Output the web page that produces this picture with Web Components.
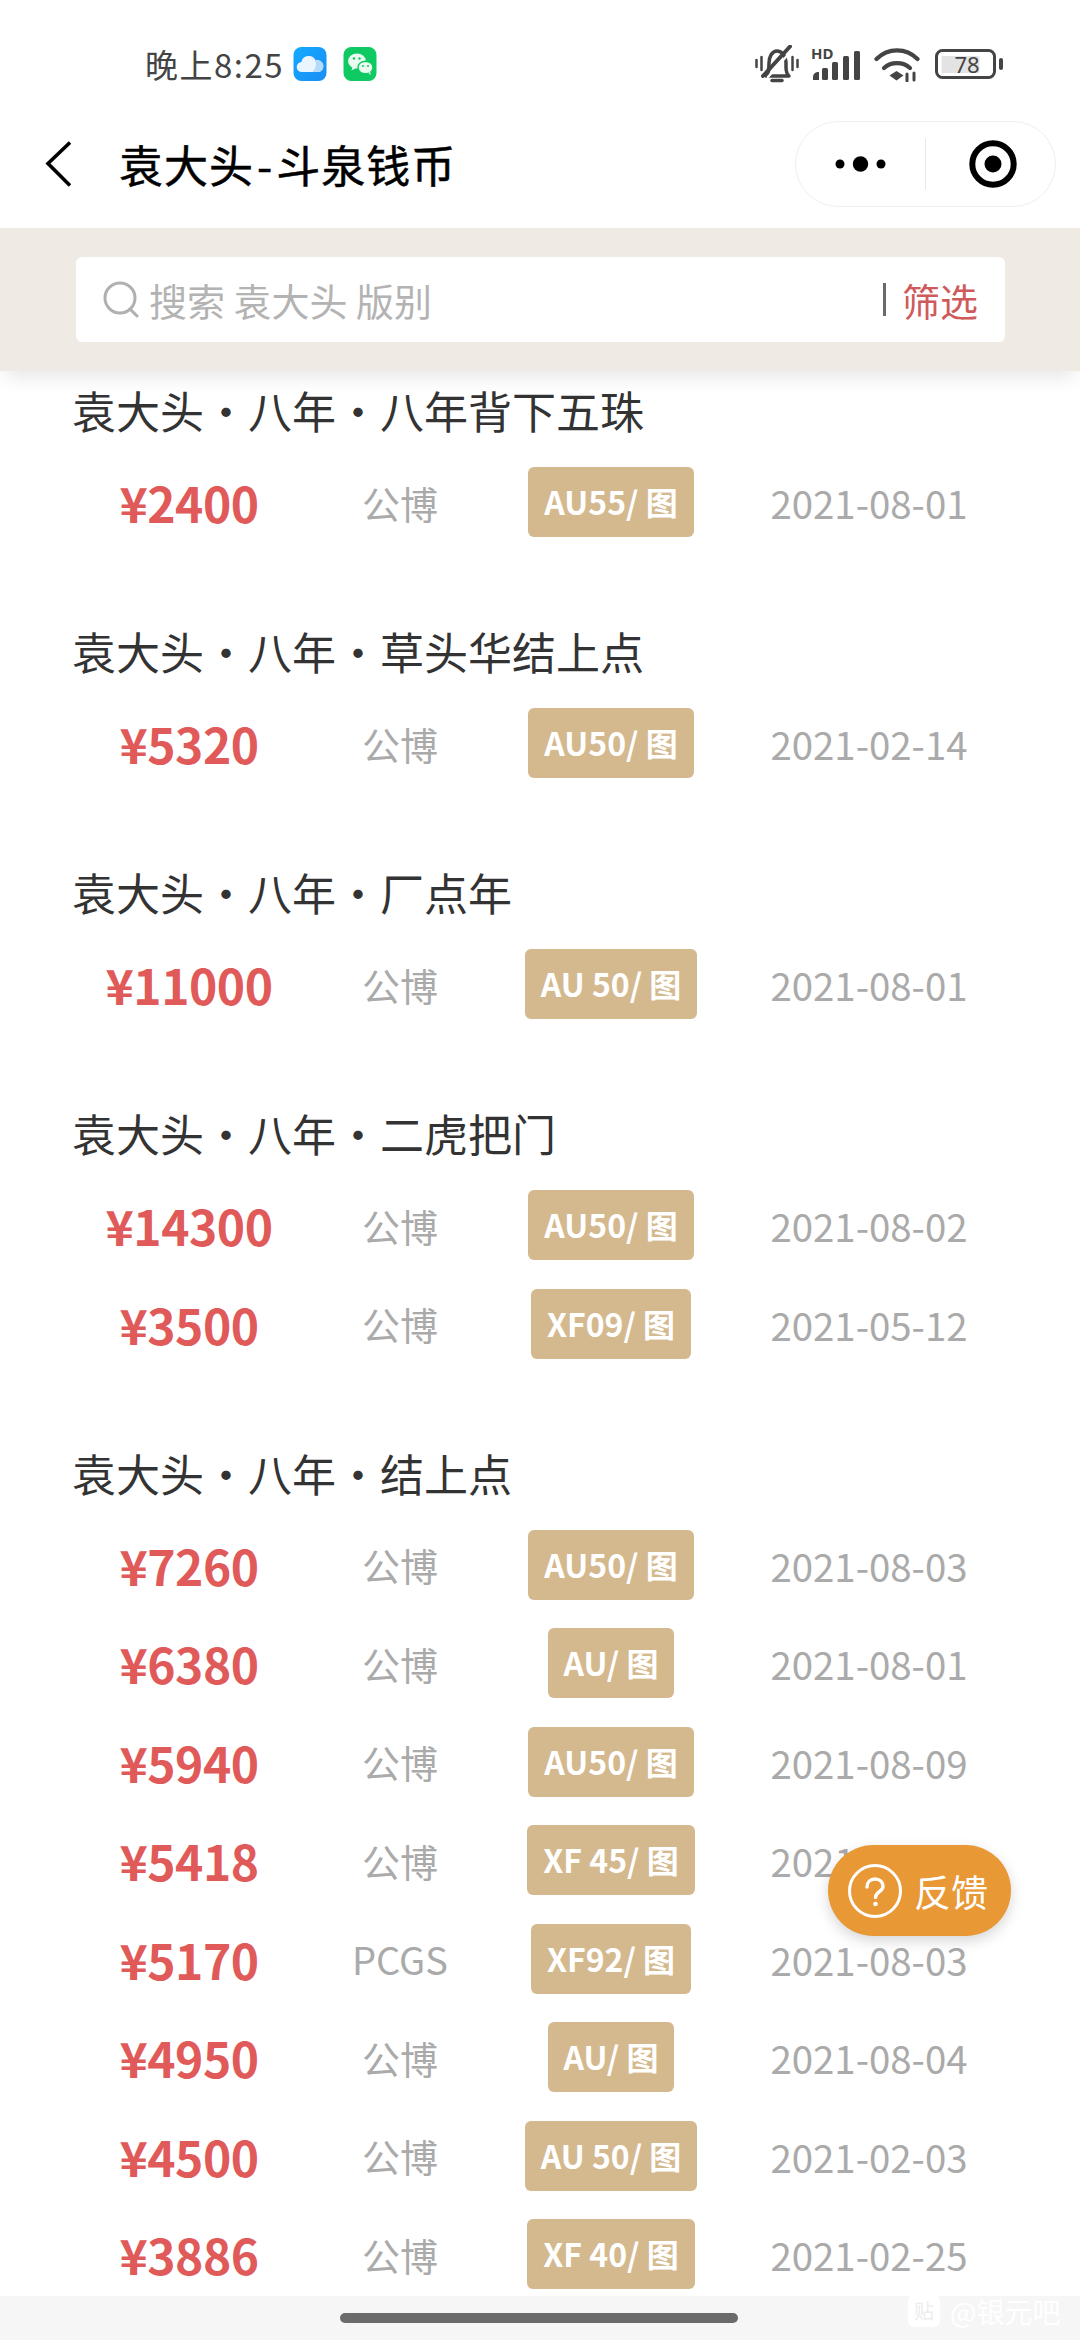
<!DOCTYPE html>
<html lang="zh-CN">
<head>
<meta charset="utf-8">
<title>袁大头-斗泉钱币</title>
<style>
html,body{margin:0;padding:0;background:#fff}
body{width:1080px;height:2340px;overflow:hidden;position:relative;display:flex;flex-direction:column;font-family:"Noto Sans CJK SC","Noto Sans",sans-serif}
coin-list{flex:1 1 0;min-height:0}
.dash{padding:0 3px}
</style>
</head>
<body>
<status-bar></status-bar>
<nav-bar>袁大头<span class="dash">-</span>斗泉钱币</nav-bar>
<search-bar placeholder="搜索 袁大头 版别" action="筛选"></search-bar>
<coin-list>
  <coin-group title="袁大头・八年・八年背下五珠">
    <coin-row price="¥2400" source="公博" grade="AU55/" date="2021-08-01"></coin-row>
  </coin-group>
  <coin-group title="袁大头・八年・草头华结上点">
    <coin-row price="¥5320" source="公博" grade="AU50/" date="2021-02-14"></coin-row>
  </coin-group>
  <coin-group title="袁大头・八年・厂点年">
    <coin-row price="¥11000" source="公博" grade="AU 50/" date="2021-08-01"></coin-row>
  </coin-group>
  <coin-group title="袁大头・八年・二虎把门">
    <coin-row price="¥14300" source="公博" grade="AU50/" date="2021-08-02"></coin-row>
    <coin-row price="¥3500" source="公博" grade="XF09/" date="2021-05-12"></coin-row>
  </coin-group>
  <coin-group title="袁大头・八年・结上点">
    <coin-row price="¥7260" source="公博" grade="AU50/" date="2021-08-03"></coin-row>
    <coin-row price="¥6380" source="公博" grade="AU/" date="2021-08-01"></coin-row>
    <coin-row price="¥5940" source="公博" grade="AU50/" date="2021-08-09"></coin-row>
    <coin-row price="¥5418" source="公博" grade="XF 45/" date="2021-08-01"></coin-row>
    <coin-row price="¥5170" source="PCGS" grade="XF92/" date="2021-08-03"></coin-row>
    <coin-row price="¥4950" source="公博" grade="AU/" date="2021-08-04"></coin-row>
    <coin-row price="¥4500" source="公博" grade="AU 50/" date="2021-02-03"></coin-row>
    <coin-row price="¥3886" source="公博" grade="XF 40/" date="2021-02-25"></coin-row>
  </coin-group>
</coin-list>
<home-bar></home-bar>
<feedback-button>反馈</feedback-button>
<script>
const FONT = '"Noto Sans CJK SC","Noto Sans",sans-serif';
function shadow(el, html){ el.attachShadow({mode:'open'}).innerHTML = html; }

customElements.define('status-bar', class extends HTMLElement{
  constructor(){ super(); shadow(this, `<style>
    :host{display:flex;align-items:center;height:105px;flex:none;padding:23px 77px 0 145px;box-sizing:border-box;background:#fff;font-family:${FONT};color:#444}
    .time{font-size:33px;line-height:40px;letter-spacing:1.5px;font-weight:400;width:148px;flex:none;white-space:nowrap}
    .apps{display:flex;gap:16px}
    .right{margin-left:auto;display:flex;align-items:center}
    svg{display:block}
    .sig{position:relative;width:49px;height:36px;margin-left:12px}
    .sig b{position:absolute;left:0;top:0;font:700 15px/15px "Noto Sans",sans-serif;color:#444}
    .sig svg{position:absolute;left:0;top:0}
    .batt{position:relative;width:68px;height:30px;margin-left:15px}
    .batt span{position:absolute;left:19px;width:26px;top:0;height:30px;text-align:center;font:400 22px/31px "Noto Sans",sans-serif;color:#444}
    </style>
    <span class="time">晚上8:25</span>
    <div class="apps">
      <svg width="34" height="34" viewBox="0 0 33 34"><defs><linearGradient id="c" x1="0" y1="0" x2="1" y2="1"><stop offset="0" stop-color="#14aaff"/><stop offset="1" stop-color="#1a8df5"/></linearGradient></defs><rect width="33" height="34" rx="8" fill="url(#c)"/><path d="M8.500 25a5 5 0 0 1-.6-10 7.500 7.500 0 0 1 14.200-1.500A5.800 5.800 0 0 1 25.500 25z" fill="#eaf5fe"/><path d="M21.500 13.300A5.800 5.800 0 0 1 26 25h-7c3-3 4.500-7 2.500-11.700z" fill="#b4dcfa"/></svg>
      <svg width="34" height="34" viewBox="0 0 33 34"><rect width="33" height="34" rx="8" fill="#0fca62"/><ellipse cx="13.500" cy="14" rx="9" ry="7.500" fill="#eafbf0"/><path d="M9 20l-1 3.500 4.500-2.500z" fill="#eafbf0"/><ellipse cx="22" cy="20.500" rx="7.500" ry="6.300" fill="#eafbf0" stroke="#0fca62" stroke-width="1.400"/><path d="M25 26l2 2-.2-3.500z" fill="#eafbf0"/><g fill="#0fca62"><circle cx="10.500" cy="11.500" r="1.200"/><circle cx="16" cy="11.500" r="1.200"/><circle cx="19.500" cy="19" r="1"/><circle cx="24.500" cy="19" r="1"/></g></svg>
    </div>
    <div class="right">
      <svg width="44" height="38" viewBox="0 0 44 38" fill="none" stroke="#444" stroke-linecap="round">
        <path d="M1.500 15v7M6.500 12v13M37.500 12v13M42.500 15v7" stroke-width="2.500"/>
        <path d="M11 31c3-3 3-7 3-13 0-6 3-12 8-12s9 5 9 11v5c0 4 .5 7 3 9z" stroke-width="3.500" stroke-linejoin="round"/>
        <path d="M35 1.500 8 31" stroke-width="4"/><path d="M39 3 13 32" stroke="#fff" stroke-width="2.500"/>
        <path d="M17 35.500h10" stroke-width="3.500"/>
      </svg>
      <div class="sig"><b>HD</b><svg width="49" height="36" viewBox="0 0 49 36" fill="#444"><path d="M2 34v-3.500a5 5 0 0 1 6-4.500v8z"/><rect x="11" y="22" width="6" height="12" rx="1.500"/><rect x="21" y="16" width="6" height="18" rx="1.500"/><rect x="32" y="10" width="6" height="24" rx="1.500"/><rect x="43" y="5" width="6" height="29" rx="1.500"/></svg></div>
      <svg width="46" height="36" viewBox="0 0 46 36" fill="none" stroke="#444" stroke-width="4.200" stroke-linecap="round" style="margin-left:14px">
        <path d="M2.500 13C14 1.500 32 1.500 43.500 13"/><path d="M10 22c7-6.500 19-6.500 26 0"/>
        <path d="M15.500 29.500l7-4.500 7 4.500-7 5z" fill="#444" stroke="none"/>
        <path d="M33 28v7M40 27v7" stroke-width="3"/>
      </svg>
      <div class="batt">
        <svg width="68" height="30" viewBox="0 0 68 30" fill="none"><rect x="1.500" y="1.500" width="58" height="27" rx="6" stroke="#444" stroke-width="3"/><rect x="6.500" y="7" width="38" height="17" rx="1" fill="#e3e3e3"/><rect x="64" y="9" width="4" height="12" rx="2" fill="#444"/></svg>
        <span>78</span>
      </div>
    </div>`);
  }
});

customElements.define('nav-bar', class extends HTMLElement{
  constructor(){ super(); shadow(this, `<style>
    :host{display:flex;align-items:center;height:123px;flex:none;padding:0 24px 5px 45px;box-sizing:border-box;background:#fff;font-family:${FONT};color:#000}
    .back{display:block;margin-right:48px;flex:none}
    .title{font-size:44px;line-height:56px;font-weight:400;letter-spacing:1px;-webkit-text-stroke:.5px #000;white-space:nowrap}
    .cap{margin-left:auto;width:261px;height:86px;box-sizing:border-box;border:1.500px solid #eee;border-radius:43px;display:grid;grid-template-columns:129px 1fr;align-items:center;background:#fff}
    svg{display:block}
    .sep{border-left:1.500px solid #e8e8e8}
    .cell{height:52px;display:flex;align-items:center;justify-content:center}
    .cell.sep svg{position:relative;left:2px}
    </style>
    <svg class="back" width="26" height="46" viewBox="0 0 26 46" fill="none"><path d="M25 1.500 3 22.500 25 44.500" stroke="#000" stroke-width="3.600"/></svg>
    <span class="title"><slot></slot></span>
    <div class="cap">
      <div class="cell"><svg width="52" height="16" viewBox="0 0 52 16" fill="#000"><circle cx="5" cy="8" r="4.500"/><circle cx="25.500" cy="8" r="7.700"/><circle cx="46" cy="8" r="4.500"/></svg></div>
      <div class="cell sep"><svg width="48" height="48" viewBox="0 0 48 48"><circle cx="24" cy="24" r="20.700" fill="none" stroke="#000" stroke-width="6"/><circle cx="24" cy="24" r="8.500" fill="#000"/></svg></div>
    </div>`);
  }
});

customElements.define('search-bar', class extends HTMLElement{
  constructor(){ super(); shadow(this, `<style>
    :host{display:block;height:143px;flex:none;position:relative;z-index:2;box-sizing:border-box;padding:29px 75px 29px 76px;background:#efeae4;box-shadow:0 12px 18px -6px rgba(0,0,0,.1);font-family:${FONT}}
    .box{height:85px;background:#fff;border-radius:6px;display:flex;align-items:center;padding:0 27px 0 27px}
    svg{display:block;flex:none;margin-right:10px}
    .ph{font-size:38px;line-height:50px;color:#b3b3b3;white-space:nowrap}
    .sep{margin-left:auto;width:3px;height:33px;background:#6a6a6a;margin-right:16px}
    .act{font-size:38px;line-height:50px;color:#cf5a5c;white-space:nowrap}
    </style>
    <div class="box">
      <svg width="36" height="38" viewBox="0 0 36 38" fill="none" stroke="#b0b0b0" stroke-width="3"><circle cx="17" cy="17" r="15"/><path d="M27 28l7 7" stroke-linecap="round"/></svg>
      <span class="ph"></span><span class="sep"></span><span class="act"></span>
    </div>`);
  }
  connectedCallback(){
    this.shadowRoot.querySelector('.ph').textContent = this.getAttribute('placeholder');
    this.shadowRoot.querySelector('.act').textContent = this.getAttribute('action');
  }
});

customElements.define('coin-list', class extends HTMLElement{
  constructor(){ super(); shadow(this, `<style>
    :host{display:block;overflow:hidden;padding-top:9px;box-sizing:border-box;background:#fff}
    </style><slot></slot>`);
  }
});

customElements.define('coin-group', class extends HTMLElement{
  constructor(){ super(); shadow(this, `<style>
    :host{display:block;padding:0 0 69.500px 72px;font-family:${FONT}}
    .t{height:60px;line-height:60px;font-size:44px;color:#333;margin-bottom:13px;white-space:nowrap}
    .r{display:block;margin-left:1px}
    </style><div class="t"></div><div class="r"><slot></slot></div>`);
  }
  connectedCallback(){ this.shadowRoot.querySelector('.t').textContent = this.getAttribute('title'); this.removeAttribute('title'); }
});

customElements.define('coin-row', class extends HTMLElement{
  constructor(){ super(); shadow(this, `<style>
    :host{display:grid;grid-template-columns:232px 190px 232px 284px;align-items:center;height:98.500px;font-family:${FONT}}
    div{text-align:center;white-space:nowrap}
    .p{font-size:48px;font-weight:700;color:#e05a5a;letter-spacing:-.5px}
    .s{font-size:38px;color:#aaa}
    .d{font-size:38.400px;color:#aaa}
    .g{justify-self:center;height:70px;line-height:68px;padding:0 16px;background:#d4b98f;border-radius:6px;color:#fff;font-size:32px;font-weight:700;box-sizing:border-box}
    </style>
    <div class="p"></div><div class="s"></div><div class="g"></div><div class="d"></div>`);
  }
  connectedCallback(){
    const r = this.shadowRoot;
    r.querySelector('.p').textContent = this.getAttribute('price');
    r.querySelector('.s').textContent = this.getAttribute('source');
    r.querySelector('.g').textContent = this.getAttribute('grade') + ' 图';
    r.querySelector('.d').textContent = this.getAttribute('date');
  }
});

customElements.define('home-bar', class extends HTMLElement{
  constructor(){ super(); shadow(this, `<style>
    :host{display:block;height:44px;flex:none;background:#f6f6f6;position:relative;font-family:${FONT}}
    .pill{position:absolute;left:340px;top:17px;width:398px;height:10px;border-radius:5px;background:#6b6b6b}
    .wm{position:absolute;left:908px;top:-1px;display:flex;align-items:center;gap:10px;color:#fff}
    .ic{width:32px;height:32px;border-radius:6px;background:#fff;color:#ededed;font-size:20px;line-height:32px;text-align:center}
    .tx{font-size:28px;line-height:32px;white-space:nowrap}
    </style>
    <div class="pill"></div>
    <div class="wm"><span class="ic">贴</span><span class="tx">@银元吧</span></div>`);
  }
});

customElements.define('feedback-button', class extends HTMLElement{
  constructor(){ super(); shadow(this, `<style>
    :host{position:absolute;left:828px;top:1845px;width:183px;height:91px;box-sizing:border-box;border-radius:45.500px;background:#e89835;box-shadow:0 5px 14px rgba(0,0,0,.16);color:#fff;display:flex;align-items:center;padding-left:20px;font-family:${FONT};font-size:37px;line-height:50px;z-index:3}
    svg{display:block;flex:none;margin-right:10px}
    </style>
    <svg width="56" height="56" viewBox="0 0 56 56" fill="none" stroke="#fff"><circle cx="27" cy="28" r="25.500" stroke-width="3"/><path d="M19 24c0-5 3.500-8 8-8s8 3 8 7.500c0 5-7.500 5.500-7.500 11" stroke-width="3.400" stroke-linecap="round"/><circle cx="27.500" cy="41" r="2.300" fill="#fff" stroke="none"/></svg>
    <slot></slot>`);
  }
});
</script>
</body>
</html>
